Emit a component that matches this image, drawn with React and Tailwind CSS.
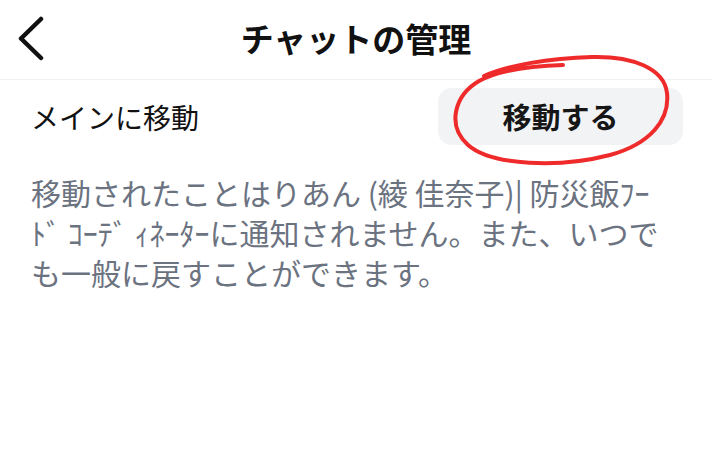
import React from "react";

export default function App() {
  const jp = { fontFamily: '"Noto Sans CJK JP", "Noto Sans", sans-serif' };
  return (
    <div className="relative w-[712px] h-[475px] bg-white overflow-hidden" style={jp}>
      <header className="relative flex h-[80px] items-center justify-center border-b border-[#f1f1f1]">
        <button className="absolute left-[14px] top-[14px] flex h-[48px] w-[34px] items-center justify-center">
          <svg width="30" height="46" viewBox="0 0 30 46" fill="none">
            <path d="M25 4 L5 23.5 L25 43" stroke="#111" strokeWidth="4.5" strokeLinecap="round" strokeLinejoin="round" />
          </svg>
        </button>
        <h1 className="text-[33px] font-bold leading-none text-[#111] tracking-[0px] mt-[-3px]">チャットの管理</h1>
      </header>

      <div className="flex items-center justify-between pl-[31px] pr-[29px] pt-[8px]">
        <span className="text-[28px] leading-none text-[#111]">メインに移動</span>
        <button className="flex h-[57px] w-[245px] items-center justify-center rounded-[14px] bg-[#f2f3f5]">
          <span className="text-[29px] font-bold leading-none text-[#161616]">移動する</span>
        </button>
      </div>

      <div className="px-[31px] pt-[27px] text-[30px] leading-[40px] text-[#6b7280]">
        <div className="whitespace-nowrap">移動されたことはりあん (綾 佳奈子)| 防災飯ﾌｰ</div>
        <div className="whitespace-nowrap">ﾄﾞ ｺｰﾃﾞ ｨﾈｰﾀｰに通知されません。また、いつで</div>
        <div className="whitespace-nowrap">も一般に戻すことができます。</div>
      </div>

      <svg className="pointer-events-none absolute left-0 top-0" width="712" height="475" viewBox="0 0 712 475" fill="none">
        <path
          d="M563 65 C530 66, 497 71, 479 81 C455 95, 446 125, 468 145 C492 166, 560 168, 610 155 C650 144, 670 120, 667 93 C664 68, 632 56, 592 57 C548 58, 506 66, 484 76"
          stroke="#ee2a2a"
          strokeWidth="4"
          strokeLinecap="round"
          strokeLinejoin="round"
        />
      </svg>
    </div>
  );
}
